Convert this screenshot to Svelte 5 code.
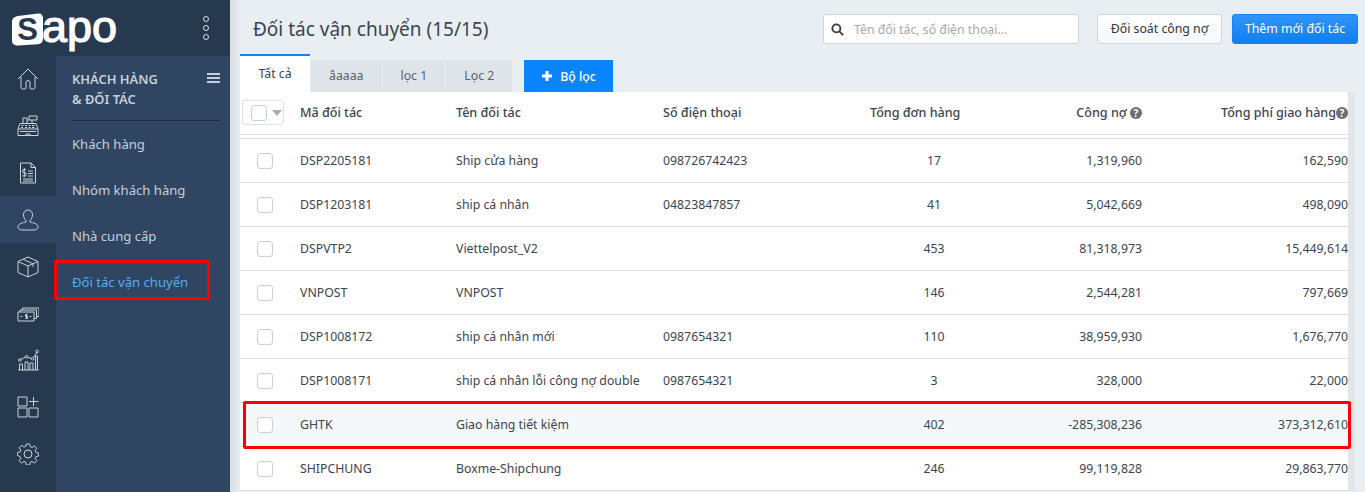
<script>
  let rows = [
    { code: "DSP2205181", name: "Ship cửa hàng", phone: "098726742423", orders: 17, debt: "1,319,960", fee: "162,590" },
    { code: "DSP1203181", name: "ship cá nhân", phone: "04823847857", orders: 41, debt: "5,042,669", fee: "498,090" },
    { code: "DSPVTP2", name: "Viettelpost_V2", phone: "", orders: 453, debt: "81,318,973", fee: "15,449,614" },
    { code: "VNPOST", name: "VNPOST", phone: "", orders: 146, debt: "2,544,281", fee: "797,669" },
    { code: "DSP1008172", name: "ship cá nhân mới", phone: "0987654321", orders: 110, debt: "38,959,930", fee: "1,676,770" },
    { code: "DSP1008171", name: "ship cá nhân lỗi công nợ double", phone: "0987654321", orders: 3, debt: "328,000", fee: "22,000" },
    { code: "GHTK", name: "Giao hàng tiết kiệm", phone: "", orders: 402, debt: "-285,308,236", fee: "373,312,610", marked: true },
    { code: "SHIPCHUNG", name: "Boxme-Shipchung", phone: "", orders: 246, debt: "99,119,828", fee: "29,863,770" }
  ];
  let submenu = ["Khách hàng", "Nhóm khách hàng", "Nhà cung cấp", "Đối tác vận chuyển"];
  let tabs = ["âaaaa", "lọc 1", "Lọc 2"];
</script>

<div class="page">
  <aside class="sidebar">
    <div class="brand">
      <svg class="logo" width="110" height="56" viewBox="0 0 110 56">
        <path d="M6 16 26 13.500c3-.4 5 1.500 5 4.500v21c0 3-2 5-5 5.300l-20 1.200c-3.500.2-6-1.500-6-5V21.500c0-3 2.500-5 6-5.500z" fill="#fff" />
        <text x="15.500" y="40" text-anchor="middle" class="logo-s">S</text>
        <text x="30" y="42" class="logo-rest" textLength="75" lengthAdjust="spacingAndGlyphs">apo</text>
      </svg>
      <div class="dots"><i></i><i></i><i></i></div>
    </div>
    <div class="nav">
      <div class="rail">
        <div class="rail-item">
          <svg viewBox="0 0 22 22"><path d="M1 11 11 1l10 10M4 9v10.500a1.500 1.500 0 0 0 1.500 1.500H8a1 1 0 0 0 1-1v-5.500a2 2 0 0 1 4 0V20a1 1 0 0 0 1 1h2.500a1.500 1.500 0 0 0 1.500-1.500V9" /></svg>
        </div>
        <div class="rail-item">
          <svg viewBox="0 0 22 22"><path d="M1 20.500h20v-6.500l-2-5.500H3L1 14zM1 14h20M9 20.500v-1.500h4v1.500M6 8.500V3h4v5.500M10 5h2M12 1h8v4h-8zM15 5v3.500M4.500 10.500h2M8 10.500h2M11.500 10.500h2M15 10.500h2.500M4 12.500h2M8 12.500h2M11.500 12.500h2M15 12.500h2.500M3 16.500h16" /></svg>
        </div>
        <div class="rail-item">
          <svg viewBox="0 0 22 22"><path d="M3.500 1H14l4.500 4.500V21h-15zM14 1v4.500h4.500M6 17h10M6 19h10M11 9h5M11 11.500h5M11 14h5M9 7.500H7a1.300 1.300 0 0 0 0 3.200h.8a1.300 1.300 0 0 1 0 3.200H5.500M7.300 6v9.200" /></svg>
        </div>
        <div class="rail-item active">
          <svg viewBox="0 0 22 22"><path d="M11 1a4.500 4.500 0 0 1 4.500 4.800c0 2.600-1.200 4.500-2.500 5.700v1.500c3 .6 8 1.800 8 4.700 0 2-2 3.300-4 3.300H5c-2 0-4-1.300-4-3.300 0-2.900 5-4.100 8-4.700v-1.500C7.700 10.300 6.500 8.400 6.500 5.800A4.500 4.500 0 0 1 11 1z" /></svg>
        </div>
        <div class="rail-item">
          <svg viewBox="0 0 22 22"><path d="M11 1 21 5.500v11L11 21 1 16.500v-11zM1 5.500 11 10l10-4.500M11 10v11M6 3.300l10 4.500v3" /></svg>
        </div>
        <div class="rail-item">
          <svg viewBox="0 0 22 22"><path d="M1 10h16v9H1zM3 10V8h16.500v8.500H17M5.500 8V6H22v8.500h-2.500M3.500 14.500h2M12.500 14.500h2M10.500 12.700h-2v1.800h2v1.800h-2M9.500 11.800v5.400" /></svg>
        </div>
        <div class="rail-item">
          <svg viewBox="0 0 22 22"><path d="M1 21h20.500M2.500 21v-6h3v6M8 21v-8h3v8M13 21v-7h3v7M18.500 21V7h2v14M4 10.500 8.500 8M11 8.500l3.500 1M17 8l2.500-4" /><circle cx="2.800" cy="11" r="1.300" /><circle cx="9.700" cy="7.700" r="1.300" /><circle cx="15.700" cy="9.700" r="1.300" /><circle cx="20" cy="2.500" r="1.300" /></svg>
        </div>
        <div class="rail-item">
          <svg viewBox="0 0 22 22"><path d="M1 1h9v9H1zM1 12h9v9H1zM12 12h9v9h-9zM16.500 1v9M12 5.500h9.500" /></svg>
        </div>
        <div class="rail-item">
          <svg viewBox="0 0 22 22"><circle cx="11" cy="11" r="4" /><path d="M9.300 1h3.400l.5 2.700 1.900.8 2.300-1.600 2.400 2.400-1.600 2.300.8 1.900 2.700.5v3l-2.700.5-.8 1.900 1.600 2.300-2.400 2.400-2.300-1.600-1.900.8-.5 2.700H9.300l-.5-2.700-1.900-.8-2.300 1.600-2.400-2.400 1.600-2.300-.8-1.900L.3 12.500v-3L3 9l.8-1.900-1.600-2.300 2.400-2.400 2.300 1.600 1.900-.8z" /></svg>
        </div>
      </div>
      <div class="submenu">
        <div class="submenu-head">
          <div>KHÁCH HÀNG<br />&amp; ĐỐI TÁC</div>
          <div class="burger"><i></i><i></i><i></i></div>
        </div>
        {#each submenu as item, i}
          <div class="submenu-item" class:current={i === 3}>
            {item}
            {#if i === 3}<span class="mark"></span>{/if}
          </div>
        {/each}
      </div>
    </div>
  </aside>

  <main class="main">
    <div class="topbar">
      <h1>Đối tác vận chuyển (15/15)</h1>
      <div class="search">
        <svg width="13" height="13" viewBox="0 0 14 14"><circle cx="5.800" cy="5.800" r="4.300" /><path d="m9 9 4 4" /></svg>
        <span>Tên đối tác, số điện thoại...</span>
      </div>
      <div class="btn">Đối soát công nợ</div>
      <div class="btn primary">Thêm mới đối tác</div>
    </div>

    <div class="tabs">
      <div class="tab selected">Tất cả</div>
      {#each tabs as tab}
        <div class="tab">{tab}</div>
      {/each}
      <div class="filter">
        <svg width="12" height="12" viewBox="0 0 12 12"><path d="M6 1v10M1 6h10" /></svg>
        Bộ lọc
      </div>
    </div>

    <div class="table">
      <div class="row head">
        <div class="cell">
          <div class="check-all"><span class="box"></span><span class="caret"></span></div>
        </div>
        <div class="cell">Mã đối tác</div>
        <div class="cell">Tên đối tác</div>
        <div class="cell">Số điện thoại</div>
        <div class="cell">Tổng đơn hàng</div>
        <div class="cell right">Công nợ <span class="help">?</span></div>
        <div class="cell right">Tổng phí giao hàng<span class="help">?</span></div>
      </div>
      {#each rows as row}
        <div class="row" class:marked={row.marked}>
          <div class="cell"><span class="box"></span></div>
          <div class="cell">{row.code}</div>
          <div class="cell">{row.name}</div>
          <div class="cell">{row.phone}</div>
          <div class="cell center">{row.orders}</div>
          <div class="cell right">{row.debt}</div>
          <div class="cell right">{row.fee}</div>
          {#if row.marked}<span class="mark"></span>{/if}
        </div>
      {/each}
    </div>
  </main>
</div>

<style>
  :global(body) {
    margin: 0;
    overflow: hidden;
    background: #e9eef2;
  }
  .page {
    display: flex;
    height: 492px;
    overflow: hidden;
    font-family: "Noto Sans", sans-serif;
    font-size: 12.3px;
    color: #3b4452;
  }
  .sidebar {
    width: 230px;
    flex: none;
    display: flex;
    flex-direction: column;
    background: #2f4562;
  }
  .brand {
    height: 56px;
    flex: none;
    box-sizing: border-box;
    display: flex;
    align-items: center;
    justify-content: space-between;
    padding: 0 21px 0 12px;
    background: #26394f;
  }
  .logo {
    display: block;
  }
  .logo-s {
    font-family: "Liberation Sans", sans-serif;
    font-weight: 700;
    font-size: 31px;
    fill: #26394f;
  }
  .logo-rest {
    font-family: "Liberation Sans", sans-serif;
    font-weight: 400;
    font-size: 44px;
    fill: #fff;
    stroke: #fff;
    stroke-width: 1.2px;
  }
  .dots {
    display: flex;
    flex-direction: column;
    gap: 3px;
  }
  .dots i {
    width: 4px;
    height: 4px;
    border: 1px solid #d6dce3;
    border-radius: 50%;
    box-sizing: content-box;
  }
  .nav {
    flex: 1;
    display: flex;
  }
  .rail {
    width: 56px;
    flex: none;
    background: #26394f;
  }
  .rail-item {
    height: 46.8px;
    display: flex;
    align-items: center;
    justify-content: center;
  }
  .rail-item.active {
    background: #2f4562;
  }
  .rail-item svg {
    width: 22px;
    height: 22px;
    fill: none;
    stroke: #cbd3dc;
    stroke-width: 1;
  }
  .submenu {
    flex: 1;
    padding: 0 10px 0 16px;
  }
  .submenu-head {
    display: flex;
    justify-content: space-between;
    padding: 13px 0 11px;
    line-height: 20px;
    font-size: 12.9px;
    font-weight: 600;
    color: #c6d0da;
    border-bottom: 1px solid #1d2c3d;
  }
  .burger {
    display: flex;
    flex-direction: column;
    gap: 2px;
    margin-top: 4px;
  }
  .burger i {
    width: 13px;
    height: 2px;
    background: #c6d0da;
  }
  .submenu-item {
    position: relative;
    height: 46px;
    line-height: 46px;
    font-size: 13.1px;
    color: #c6d0da;
  }
  .submenu-item.current {
    color: #56aef0;
  }
  .mark {
    position: absolute;
    border: 3px solid #f00;
    border-radius: 2px;
    box-sizing: border-box;
    pointer-events: none;
  }
  .submenu-item .mark {
    left: -18px;
    right: 10px;
    top: 1px;
    height: 40px;
  }
  .main {
    flex: 1;
    min-width: 0;
    padding: 0 7px 0 10px;
    background: linear-gradient(90deg, #d9dee3, #e9eef2 10px);
  }
  .topbar {
    height: 54px;
    display: flex;
    align-items: flex-start;
    padding-top: 14px;
    box-sizing: border-box;
  }
  h1 {
    margin: 0 auto 0 13px;
    font-size: 19px;
    font-weight: 400;
    line-height: 30px;
    color: #3b4452;
  }
  .search {
    width: 256px;
    height: 30px;
    box-sizing: border-box;
    display: flex;
    align-items: center;
    gap: 10px;
    padding-left: 7px;
    background: #fff;
    border: 1px solid #cfd6dc;
    border-radius: 3px;
    margin-right: 18px;
    color: #a9a9a9;
  }
  .search svg {
    fill: none;
    stroke: #3b3b3b;
    stroke-width: 2;
  }
  .btn {
    width: 125px;
    height: 30px;
    box-sizing: border-box;
    text-align: center;
    line-height: 28px;
    border: 1px solid #cfd6dc;
    border-radius: 3px;
    background: linear-gradient(#fff, #f5f7f9);
    margin-right: 10px;
    color: #2f3742;
    white-space: nowrap;
  }
  .btn.primary {
    width: 126px;
    background: linear-gradient(#2f94ff, #0f7fef);
    border-color: #1a82ea;
    color: #fff;
    margin-right: 0;
  }
  .tabs {
    height: 38px;
    display: flex;
    align-items: flex-end;
  }
  .tab {
    height: 32px;
    line-height: 32px;
    padding: 0 18px;
    margin-right: 1px;
    background: #dfe4e9;
    color: #566270;
  }
  .tab.selected {
    width: 70px;
    box-sizing: border-box;
    padding: 0;
    text-align: center;
    height: 38px;
    line-height: 36px;
    background: #fff;
    border-top: 2px solid #0a84ff;
    color: #3b4452;
  }
  .filter {
    height: 32px;
    display: flex;
    align-items: center;
    gap: 7px;
    margin-left: 11px;
    padding: 0 17px;
    background: #0a84ff;
    color: #fff;
    font-weight: 500;
  }
  .filter svg {
    fill: none;
    stroke: #fff;
    stroke-width: 3;
  }
  .table {
    width: 1108px;
    background: #fff;
    box-shadow: 7px 0 0 #e2e6ea;
  }
  .row {
    position: relative;
    display: grid;
    grid-template-columns: 60px 156px 207px 207px 128px 144px 206px;
    height: 44px;
    box-sizing: border-box;
    align-items: center;
    border-bottom: 1px solid #dddfe1;
  }
  .row.head {
    height: 43px;
    padding-bottom: 1px;
    font-size: 12.55px;
    font-weight: 500;
    margin-bottom: 3px;
  }
  .row.head + .row {
    border-top: 1px solid #dddfe1;
    height: 45px;
  }
  .row.marked {
    background: #f5f8fb;
  }
  .row .mark {
    left: 3px;
    right: -3px;
    top: -2px;
    height: 48px;
  }
  .cell {
    white-space: nowrap;
  }
  .cell:first-child {
    padding-left: 17px;
  }
  .cell.center {
    text-align: center;
  }
  .cell.right {
    text-align: right;
  }
  .box {
    display: block;
    width: 16px;
    height: 16px;
    box-sizing: border-box;
    background: #fff;
    border: 1px solid #ccd1d6;
    border-radius: 3px;
  }
  .check-all {
    display: flex;
    align-items: center;
    gap: 5px;
    width: 42px;
    height: 25px;
    box-sizing: border-box;
    margin-left: -15px;
    padding-left: 8px;
    border: 1px solid #dde1e4;
    border-radius: 3px;
  }
  .caret {
    border: 5px solid transparent;
    border-top: 6px solid #a6adb5;
    border-bottom: 0;
  }
  .help {
    display: inline-block;
    width: 12px;
    height: 12px;
    line-height: 12px;
    border-radius: 50%;
    background: #6e6e6e;
    color: #fff;
    font-size: 10px;
    font-weight: 700;
    text-align: center;
  }
</style>
